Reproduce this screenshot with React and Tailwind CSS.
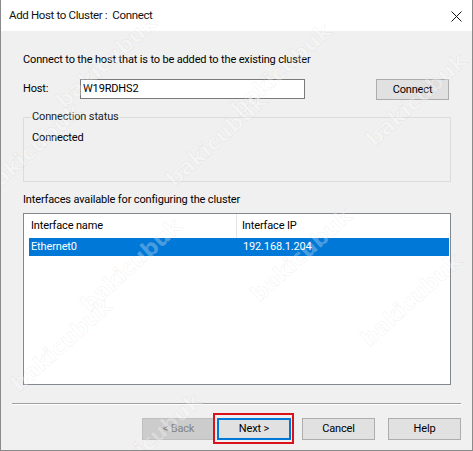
import React from "react";

const marks = [
  [105, 62], [280, 70],
  [30, 150], [215, 140], [415, 100],
  [130, 265], [300, 255],
  [60, 345], [410, 300],
  [150, 440],
];

export default function App() {
  return (
    <div className="w-[473px] h-[451px] relative overflow-hidden flex flex-col border-x border-b border-[#8a8a8a] font-['Roboto',sans-serif] text-[11px] tracking-[-0.15px] text-black">
      <div className="h-[31px] shrink-0 bg-white flex items-center justify-between pl-[8px] pr-[10px]">
        <span className="whitespace-pre text-[11.5px] tracking-[-0.35px] text-[#111]">Add Host to Cluster :  Connect</span>
        <svg width="11" height="11" viewBox="0 0 11 11" className="mt-[1px]">
          <path d="M0.5 0.5 L10.5 10.5 M10.5 0.5 L0.5 10.5" stroke="#111" strokeWidth="1" fill="none" />
        </svg>
      </div>
      <div className="flex-1 bg-[#f0f0f0] flex flex-col">
        <div className="pl-[22px] pr-[21px] pt-[21px] flex flex-col">
          <p className="leading-[16px]">Connect to the host that is to be added to the existing cluster</p>
          <div className="mt-[11px] flex items-start h-[21px]">
            <span className="w-[57px] leading-[20px]">Host:</span>
            <div className="w-[225px] h-[20px] border border-[#7a7a7a] bg-white pl-[2px] leading-[18px]">W19RDHS2</div>
            <button className="ml-auto mr-[2px] w-[73px] h-[21px] bg-[#e1e1e1] border border-[#adadad] leading-[19px] text-center">Connect</button>
          </div>
          <fieldset className="mt-[9px] h-[73px] border border-[#dcdcdc] pl-[7px]">
            <legend className="px-[1px] leading-[16px] text-[#222]">Connection status</legend>
            <div className="mt-[5px] pl-[1px] leading-[16px]">Connected</div>
          </fieldset>
          <p className="mt-[10px] leading-[16px]">Interfaces available for configuring the cluster</p>
          <div className="mt-[5px] h-[172px] border border-[#828790] bg-white flex flex-col">
            <div className="h-[24px] flex items-center">
              <div className="w-[213px] h-full border-r border-[#e5e5e5] pl-[7px] leading-[24px]">Interface name</div>
              <div className="pl-[5px] leading-[24px]">Interface IP</div>
            </div>
            <div className="ml-[5px] mr-[1px] h-[18px] bg-[#0078d7] text-white flex items-center">
              <div className="w-[208px] pl-[2px] leading-[18px]">Ethernet0</div>
              <div className="pl-[6px] leading-[18px]">192.168.1.204</div>
            </div>
          </div>
        </div>
        <div className="mt-[18px] mx-[11px] h-[2px] border-t border-[#a0a0a0] border-b border-b-white" />
        <div className="mt-[13px] flex justify-end pr-[11px]">
          <button className="w-[73px] h-[22px] bg-[#cccccc] border border-[#bfbfbf] text-[#838383] text-center leading-[20px]">&lt; Back</button>
          <span className="relative ml-[2px]">
            <button className="w-[74px] h-[22px] bg-[#e1e1e1] border-2 border-[#0078d7] text-center leading-[18px]">Next &gt;</button>
            <span className="absolute -left-[4px] -right-[3px] -top-[5px] -bottom-[4px] border-2 border-[#d9121b] pointer-events-none" />
          </span>
          <button className="ml-[11px] w-[73px] h-[22px] bg-[#e1e1e1] border border-[#adadad] text-center leading-[20px]">Cancel</button>
          <button className="ml-[13px] w-[73px] h-[22px] bg-[#e1e1e1] border border-[#adadad] text-center leading-[20px]">Help</button>
        </div>
      </div>
      <div className="absolute inset-0 pointer-events-none">
        {marks.map(([x, y], i) => (
          <span
            key={i}
            className="absolute font-['DejaVu_Sans',sans-serif] font-bold text-[22px] text-white/30 [-webkit-text-stroke:1px_rgba(0,0,0,0.05)] -rotate-[42deg] -translate-x-1/2 -translate-y-1/2"
            style={{ left: x, top: y }}
          >
            bakicubuk
          </span>
        ))}
      </div>
    </div>
  );
}
